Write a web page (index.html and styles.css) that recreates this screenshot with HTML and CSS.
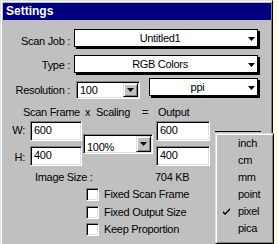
FILE: index.html
```html
<!DOCTYPE html>
<html>
<head>
<meta charset="utf-8">
<link rel="stylesheet" href="styles.css">
</head>
<body>
<div class="window">
  <div class="titlebar">Settings</div>

  <div class="row row-job">
    <span class="label lbl-job">Scan Job :</span>
    <div class="popup popup-wide"><span class="ptext">Untitled1</span><svg class="arrow" width="7" height="4" viewBox="0 0 7 4"><polygon points="0,0 7,0 3.5,4" fill="#000"/></svg></div>
  </div>

  <div class="row row-type">
    <span class="label lbl-type">Type :</span>
    <div class="popup popup-wide"><span class="ptext">RGB Colors</span><svg class="arrow" width="7" height="4" viewBox="0 0 7 4"><polygon points="0,0 7,0 3.5,4" fill="#000"/></svg></div>
  </div>

  <div class="row row-res">
    <span class="label lbl-res">Resolution :</span>
    <div class="combo combo-res"><span class="ctext">100</span><span class="cbtn"><svg width="7" height="4" viewBox="0 0 7 4"><polygon points="0,0 7,0 3.5,4" fill="#000"/></svg></span></div>
    <div class="popup popup-ppi"><span class="ptext">ppi</span><svg class="arrow" width="7" height="4" viewBox="0 0 7 4"><polygon points="0,0 7,0 3.5,4" fill="#000"/></svg></div>
  </div>

  <div class="heads">
    <span>Scan Frame</span><span>x</span><span>Scaling</span><span>=</span><span>Output</span>
  </div>

  <div class="dims">
    <span class="dlabel r1">W:</span>
    <div class="field r1">600</div>
    <div class="combo combo-scale"><span class="ctext">100%</span><span class="cbtn"><svg width="7" height="4" viewBox="0 0 7 4"><polygon points="0,0 7,0 3.5,4" fill="#000"/></svg></span></div>
    <div class="field out r1">600</div>
    <span class="dlabel r2">H:</span>
    <div class="field r2">400</div>
    <div class="field out r2">400</div>
  </div>

  <div class="size-row">
    <span class="size-label">Image Size :</span>
    <span class="size-val">704 KB</span>
  </div>

  <div class="checks">
    <div class="check"><span class="cbox"></span><span>Fixed Scan Frame</span></div>
    <div class="check"><span class="cbox"></span><span>Fixed Output Size</span></div>
    <div class="check"><span class="cbox"></span><span>Keep Proportion</span></div>
  </div>

  <div class="menu-edge"></div>
  <div class="menu">
    <div class="item">inch</div>
    <div class="item">cm</div>
    <div class="item">mm</div>
    <div class="item">point</div>
    <div class="item checked"><svg class="tick" width="7" height="7" viewBox="0 0 7 7"><polygon points="0,3 2,5 7,0 7,2 2,7 0,5" fill="#000"/></svg>pixel</div>
    <div class="item">pica</div>
  </div>
</div>
</body>
</html>
```

FILE: styles.css
```css
html, body {
  margin: 0;
  padding: 0;
}
body {
  background: #ffffe1;
  font-family: "Liberation Sans", Arial, sans-serif;
  font-size: 11px;
  letter-spacing: -0.3px;
  color: #000;
  overflow: hidden;
}
.window {
  position: relative;
  width: 273px;
  height: 252px;
  box-sizing: border-box;
  background: #c0c0c0;
  border: 1px solid;
  border-color: #dfdfdf #000 #000 #dfdfdf;
  box-shadow: inset 1px 1px #fff, inset -1px -1px #808080;
  padding: 2px 1px 0 2px;
}
.titlebar {
  height: 17px;
  line-height: 17px;
  background: #000080;
  color: #fff;
  font-weight: bold;
  font-size: 12px;
  letter-spacing: 0;
  padding-left: 3px;
}
.row {
  display: flex;
  align-items: flex-start;
}
.label {
  width: 67px;
  text-align: right;
  line-height: 13px;
  flex: none;
}
.row-job { margin-top: 9px; height: 18px; }
.row-type { margin-top: 8px; height: 18px; }
.row-res { margin-top: 5px; height: 21px; }
.lbl-job { padding-top: 6px; }
.lbl-type { padding-top: 4px; }
.lbl-res { padding-top: 6px; }

.popup {
  position: relative;
  box-sizing: border-box;
  height: 18px;
  border: 1px solid #000;
  background: #fff;
  box-shadow: 2px 2px 0 #000;
  display: flex;
  align-items: center;
  padding-right: 12px;
  flex: none;
}
.popup-wide { margin-left: 4px; width: 184px; }
.popup-ppi { margin-left: 9px; width: 109px; }
.ptext {
  flex: 1;
  text-align: center;
  line-height: 16px;
}
.arrow {
  position: absolute;
  right: 2px;
  top: 7px;
}

.combo {
  box-sizing: border-box;
  height: 18px;
  background: #fff;
  border: 1px solid;
  border-color: #808080 #fff #fff #808080;
  box-shadow: inset 1px 1px #000, inset -1px -1px #dfdfdf;
  display: flex;
  padding: 1px;
  flex: none;
}
.combo-res { margin-left: 6px; margin-top: 3px; width: 64px; }
.ctext {
  flex: 1;
  padding-left: 2px;
  line-height: 14px;
}
.cbtn {
  width: 15px;
  box-sizing: border-box;
  background: #c0c0c0;
  border: 1px solid;
  border-color: #dfdfdf #000 #000 #dfdfdf;
  box-shadow: inset 1px 1px #fff, inset -1px -1px #808080;
  display: flex;
  align-items: center;
  justify-content: center;
}

.heads {
  margin-top: 7px;
  height: 13px;
  line-height: 13px;
  display: grid;
  grid-template-columns: 62px 11px 46px 16px auto;
  padding-left: 20px;
}

.dims {
  margin-top: 2px;
  display: grid;
  grid-template-columns: 27px 52px 71px 57px;
  grid-template-rows: 20px 20px;
  row-gap: 5px;
}
.dlabel {
  text-align: right;
  padding-right: 5px;
  line-height: 13px;
  padding-top: 3px;
}
.r1 { grid-row: 1; }
.r2 { grid-row: 2; }
.dlabel.r1 { grid-column: 1; }
.dlabel.r2 { grid-column: 1; padding-top: 5px; }
.field {
  grid-column: 2;
  box-sizing: border-box;
  height: 20px;
  background: #fff;
  border: 1px solid;
  border-color: #808080 #fff #fff #808080;
  box-shadow: inset 1px 1px #000, inset -1px -1px #dfdfdf;
  padding: 1px 3px;
  line-height: 14px;
}
.field.out {
  grid-column: 4;
  width: 54px;
  justify-self: end;
}
.combo-scale {
  grid-column: 3;
  grid-row: 1 / 3;
  align-self: center;
  justify-self: end;
  width: 70px;
  height: 20px;
}
.combo-scale .ctext { line-height: 18px; padding-top: 2px; }

.size-row {
  margin-top: 5px;
  height: 13px;
  line-height: 13px;
  display: grid;
  grid-template-columns: 120px auto;
  padding-left: 32px;
}

.checks {
  margin-top: 4px;
  padding-left: 83px;
  display: flex;
  flex-direction: column;
}
.check {
  display: flex;
  align-items: flex-start;
  height: 13px;
  line-height: 13px;
}
.check + .check { margin-top: 5px; }
.check:last-child { margin-top: 4px; }
.cbox {
  width: 13px;
  height: 13px;
  box-sizing: border-box;
  background: #fff;
  border: 1px solid;
  border-color: #808080 #fff #fff #808080;
  box-shadow: inset 1px 1px #000, inset -1px -1px #dfdfdf;
  margin-right: 5px;
  flex: none;
}

.menu-edge {
  position: absolute;
  left: 214px;
  top: 130px;
  width: 46px;
  height: 1px;
  background: #000;
}
.menu {
  position: absolute;
  left: 214px;
  top: 132px;
  width: 59px;
  height: 111px;
  box-sizing: border-box;
  background: #c0c0c0;
  border: 1px solid;
  border-color: #dfdfdf #000 #000 #dfdfdf;
  box-shadow: inset 1px 1px #fff, inset -1px -1px #808080;
  padding: 1px 0 0 0;
}
.item {
  position: relative;
  height: 17px;
  line-height: 17px;
  padding-left: 22px;
}
.tick {
  position: absolute;
  left: 7px;
  top: 5px;
}
```
